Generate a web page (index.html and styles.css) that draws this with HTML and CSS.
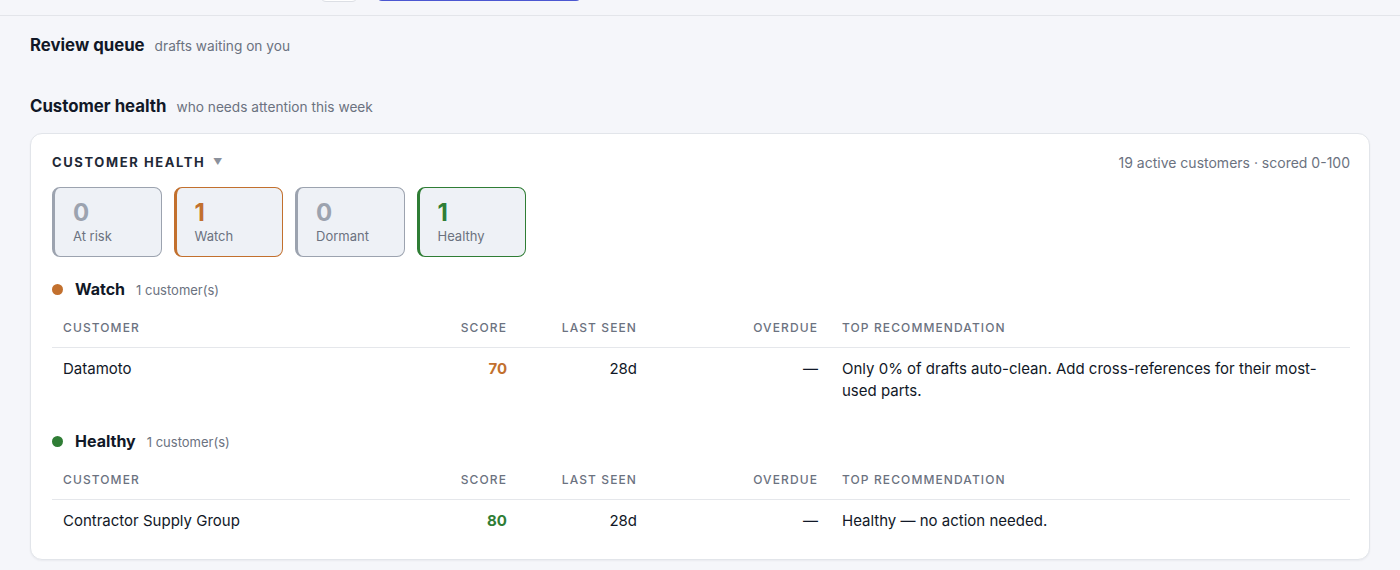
FILE: index.html
```html
<!DOCTYPE html>
<html lang="en">

<head>
  <meta charset="utf-8">
  <meta name="viewport" content="width=device-width, initial-scale=1.0">
  <title>Dashboard</title>
  <link rel="stylesheet" href="styles.css">
</head>

<body>
  <div class="topbar">
    <div class="topbar-actions">
      <button class="btn-ghost" type="button" aria-label="More"></button>
      <button class="btn-primary" type="button" aria-label="New draft"></button>
    </div>
  </div>

  <main class="page">
    <section class="section">
      <div class="section-title">
        <h2>Review queue</h2>
        <span class="section-sub">drafts waiting on you</span>
      </div>
    </section>

    <section class="section">
      <div class="section-title">
        <h2>Customer health</h2>
        <span class="section-sub">who needs attention this week</span>
      </div>

      <div class="card">
        <div class="card-head">
          <div class="card-label">CUSTOMER HEALTH <span class="caret">▼</span></div>
          <div class="card-meta">19 active customers · scored 0-100</div>
        </div>

        <div class="stats">
          <div class="stat stat-muted">
            <div class="stat-num">0</div>
            <div class="stat-label">At risk</div>
          </div>
          <div class="stat stat-watch">
            <div class="stat-num">1</div>
            <div class="stat-label">Watch</div>
          </div>
          <div class="stat stat-muted">
            <div class="stat-num">0</div>
            <div class="stat-label">Dormant</div>
          </div>
          <div class="stat stat-healthy">
            <div class="stat-num">1</div>
            <div class="stat-label">Healthy</div>
          </div>
        </div>

        <div class="group">
          <div class="group-head">
            <span class="dot dot-watch"></span>
            <span class="group-name">Watch</span>
            <span class="group-count">1 customer(s)</span>
          </div>
          <table class="health-table">
            <thead>
              <tr>
                <th class="col-name">Customer</th>
                <th class="col-score num">Score</th>
                <th class="col-seen num">Last seen</th>
                <th class="col-overdue num">Overdue</th>
                <th class="col-rec">Top recommendation</th>
              </tr>
            </thead>
            <tbody>
              <tr>
                <td>Datamoto</td>
                <td class="num score score-watch">70</td>
                <td class="num">28d</td>
                <td class="num">—</td>
                <td>Only 0% of drafts auto-clean. Add cross-references for their most-used parts.</td>
              </tr>
            </tbody>
          </table>
        </div>

        <div class="group">
          <div class="group-head">
            <span class="dot dot-healthy"></span>
            <span class="group-name">Healthy</span>
            <span class="group-count">1 customer(s)</span>
          </div>
          <table class="health-table">
            <thead>
              <tr>
                <th class="col-name">Customer</th>
                <th class="col-score num">Score</th>
                <th class="col-seen num">Last seen</th>
                <th class="col-overdue num">Overdue</th>
                <th class="col-rec">Top recommendation</th>
              </tr>
            </thead>
            <tbody>
              <tr>
                <td>Contractor Supply Group</td>
                <td class="num score score-healthy">80</td>
                <td class="num">28d</td>
                <td class="num">—</td>
                <td>Healthy — no action needed.</td>
              </tr>
            </tbody>
          </table>
        </div>
      </div>
    </section>
  </main>
</body>

</html>
```

FILE: styles.css
```css
body,
html {
  margin: 0;
  padding: 0;
  font-family: Inter, "Noto Sans", sans-serif;
  background-color: #f5f6fa;
  color: #111827;
}

.topbar {
  height: 15px;
  overflow: hidden;
  border-bottom: 1px solid #e3e5ea;
}

.topbar-actions {
  display: flex;
  align-items: flex-end;
  gap: 18px;
  height: 2px;
  padding-left: 320px;
}

.topbar-actions button {
  flex: none;
  height: 36px;
  border-radius: 6px;
}

.btn-ghost {
  width: 38px;
  background-color: #ffffff;
  border: 1px solid #dcdfe5;
}

.btn-primary {
  width: 206px;
  margin-bottom: 1px;
  background-color: #4b57d1;
  border: none;
}

.page {
  padding: 17px 30px 20px 30px;
}

.section-title {
  display: flex;
  align-items: baseline;
  gap: 10px;
  height: 24px;
}

.section-title h2 {
  margin: 0;
  font-size: 16.8px;
  font-weight: 700;
  line-height: 24px;
  color: #111827;
}

.section-sub {
  font-size: 13.7px;
  color: #6b7280;
}

.section + .section {
  margin-top: 37px;
}

.card {
  margin-top: 15px;
  padding: 19px 19px 17px 21px;
  background-color: #ffffff;
  border: 1px solid #e2e5ea;
  border-radius: 12px;
  box-shadow: 0 1px 2px rgba(17, 24, 39, 0.05);
}

.card-head {
  display: flex;
  justify-content: space-between;
  align-items: center;
  height: 18px;
}

.card-label {
  font-size: 13px;
  font-weight: 700;
  letter-spacing: 1.6px;
  color: #1f2937;
}

.caret {
  display: inline-block;
  margin-left: 3px;
  font-size: 9px;
  color: #8b919c;
  vertical-align: 2px;
  letter-spacing: 0;
}

.card-meta {
  font-size: 14px;
  color: #6b7280;
}

.stats {
  display: flex;
  gap: 12px;
  margin-top: 16px;
}

.stat {
  width: 87.5px;
  padding: 11px 0 11px 18px;
  background-color: #eef1f6;
  border: 1px solid #9ca3af;
  border-left-width: 3px;
  border-radius: 8px;
}

.stat-num {
  font-size: 24px;
  font-weight: 700;
  line-height: 28px;
  color: #9ca3af;
}

.stat-label {
  font-size: 13px;
  line-height: 18px;
  color: #6b7280;
}

.stat-watch {
  border-color: #c2702e;
}

.stat-watch .stat-num {
  color: #c2702e;
}

.stat-healthy {
  border-color: #2f7d35;
}

.stat-healthy .stat-num {
  color: #2f7d35;
}

.group {
  margin-top: 22px;
}

.group + .group {
  margin-top: 19px;
}

.group-head {
  display: flex;
  align-items: baseline;
  height: 20px;
}

.dot {
  display: inline-block;
  width: 11px;
  height: 11px;
  margin-right: 12px;
  border-radius: 50%;
  align-self: center;
}

.dot-watch {
  background-color: #c2702e;
}

.dot-healthy {
  background-color: #2f7d35;
}

.group-name {
  font-size: 16px;
  font-weight: 700;
  line-height: 20px;
}

.group-count {
  margin-left: 11px;
  font-size: 13px;
  color: #6b7280;
}

.health-table {
  width: 100%;
  margin-top: 10px;
  border-collapse: collapse;
  table-layout: fixed;
}

.health-table th {
  padding: 10px 12px;
  font-size: 12px;
  font-weight: 500;
  line-height: 18px;
  letter-spacing: 1.1px;
  text-transform: uppercase;
  text-align: left;
  color: #6b7280;
  border-bottom: 1px solid #e5e7eb;
}

.health-table td {
  padding: 10px 12px;
  font-size: 15px;
  line-height: 22px;
  vertical-align: top;
  color: #111827;
}

.health-table th:first-child,
.health-table td:first-child {
  padding-left: 11px;
}

.health-table .num {
  text-align: right;
}

.col-score {
  width: 96px;
}

.col-seen {
  width: 106px;
}

.col-overdue {
  width: 157px;
}

.col-rec {
  width: 496px;
}

.health-table .score {
  font-weight: 700;
}

.health-table .score-watch {
  color: #c2702e;
}

.health-table .score-healthy {
  color: #2f7d35;
}
```
